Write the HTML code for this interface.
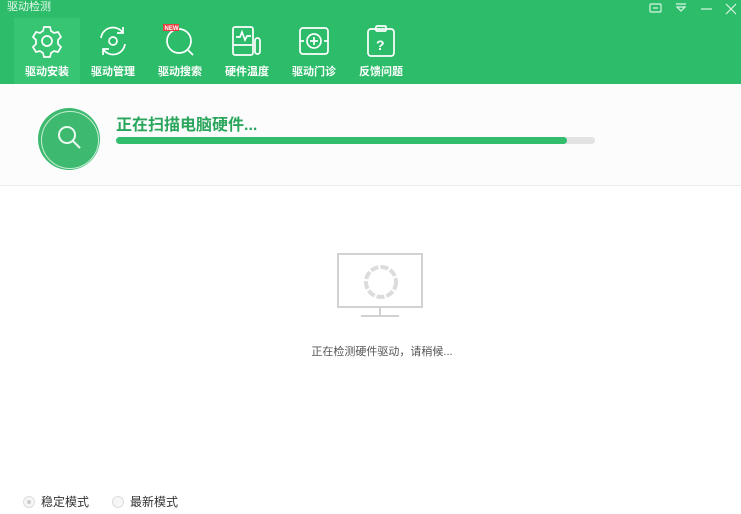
<!DOCTYPE html>
<html><head><meta charset="utf-8">
<style>
*{margin:0;padding:0;box-sizing:border-box}
body{width:741px;height:514px;overflow:hidden;background:#fff;font-family:"Liberation Sans","Noto Sans CJK SC",sans-serif;position:relative}
.hdr{position:absolute;left:0;top:0;width:741px;height:84px;background:#2dbd6a}
.title{position:absolute;left:7px;top:0;font-size:11px;color:#e8f8ee;line-height:14px}
.tab{position:absolute;top:18px;width:66px;height:66px;color:#fff;font-size:11px;font-weight:bold;text-align:center}
.tab.sel{background:#37c473}
.tab svg{position:absolute;left:16px;top:6px}
.tab span{position:absolute;left:0;right:0;top:47px;line-height:14px}
.strip{position:absolute;left:0;top:84px;width:741px;height:102px;background:#fcfcfc;border-bottom:1px solid #ececec}
.circ{position:absolute;left:38px;top:108px;width:62px;height:62px;border-radius:50%;background:#3dba6f}
.circ:after{content:"";position:absolute;left:3px;top:3px;width:56px;height:56px;border-radius:50%;border:1.5px solid #c8eed6}
.scan{position:absolute;left:116px;top:111px;font-size:16px;font-weight:bold;color:#2aa65c}
.bar{position:absolute;left:116px;top:137px;width:479px;height:7px;border-radius:4px;background:#e3e3e3}
.bar div{width:451px;height:7px;border-radius:4px;background:#31bd6b}
.msg{position:absolute;left:0;width:764px;top:343px;text-align:center;font-size:11px;color:#555}
.radio{position:absolute;top:495px;font-size:12px;color:#333;line-height:14px}
.radio i{display:inline-block;width:12px;height:12px;border:1px solid #ddd;border-radius:50%;vertical-align:-2px;margin-right:6px;position:relative;background:#f6f6f6}
.radio i.on:after{content:"";position:absolute;left:3px;top:3px;width:4px;height:4px;border-radius:50%;background:#ccc}
</style></head><body>
<div class="hdr">
<div class="title">驱动检测</div>
<svg style="position:absolute;left:649px;top:3px" width="90" height="12" fill="none" stroke="#d9f5e3" stroke-width="1.2">
<rect x="1" y="1" width="11" height="8" rx="1"/><path d="M4 5h5"/>
<path d="M27 1h10M28 4h8l-4 4z"/>
<path d="M52 6h11"/>
<path d="M77 1l10 10M87 1l-10 10"/>
</svg>
<div class="tab sel" style="left:14px"><svg width="34" height="34" fill="none" stroke="#fff" stroke-width="1.7"><path d="M14 3h6l1 4 3 2 4-1 3 5-3 3v4l3 3-3 5-4-1-3 2-1 4h-6l-1-4-3-2-4 1-3-5 3-3v-4l-3-3 3-5 4 1 3-2z"/><circle cx="17" cy="17" r="5"/></svg><span>驱动安装</span></div>
<div class="tab" style="left:80px"><svg width="34" height="34" fill="none" stroke="#fff" stroke-width="1.7"><path d="M5 14a12 12 0 0 1 22-5M29 20a12 12 0 0 1-22 5"/><path d="M27 3v6h-6M7 31v-6h6"/><circle cx="17" cy="17" r="4"/></svg><span>驱动管理</span></div>
<div class="tab" style="left:147px"><svg width="34" height="34" fill="none" stroke="#fff" stroke-width="1.7"><circle cx="16" cy="17" r="12"/><path d="M25 26l5 5"/><rect x="0" y="0" width="16" height="7" fill="#e84040" stroke="none"/><text x="1.5" y="6" font-size="6" fill="#fff" stroke="none" font-family="Liberation Sans" font-weight="bold">NEW</text></svg><span>驱动搜索</span></div>
<div class="tab" style="left:214px"><svg width="34" height="34" fill="none" stroke="#fff" stroke-width="1.7"><rect x="3" y="3" width="20" height="28" rx="2"/><path d="M3 21h20M6 13h4l2-5 3 8 2-4h4"/><rect x="25" y="14" width="5" height="16" rx="2.5"/></svg><span>硬件温度</span></div>
<div class="tab" style="left:281px"><svg width="34" height="34" fill="none" stroke="#fff" stroke-width="1.7"><rect x="3" y="4" width="28" height="26" rx="3"/><path d="M3 17h4M27 17h4"/><circle cx="17" cy="17" r="7"/><path d="M17 13v8M13 17h8"/></svg><span>驱动门诊</span></div>
<div class="tab" style="left:348px"><svg width="34" height="34" fill="none" stroke="#fff" stroke-width="1.7"><rect x="4" y="5" width="26" height="27" rx="3"/><rect x="12" y="2" width="10" height="5" rx="1"/><text x="12" y="26" font-size="14" fill="#fff" stroke="none" font-family="Liberation Sans">?</text></svg><span>反馈问题</span></div>
</div>
<div class="strip"></div>
<div class="circ"><svg style="position:absolute;left:18px;top:16px" width="28" height="28" fill="none" stroke="#eafaf0" stroke-width="2"><circle cx="11" cy="11" r="8"/><path d="M17 17l7 7"/></svg></div>
<div class="scan">正在扫描电脑硬件...</div>
<div class="bar"><div></div></div>
<svg style="position:absolute;left:337px;top:253px" width="88" height="66" fill="none" stroke="#d2d2d2" stroke-width="2">
<rect x="1" y="1" width="84" height="53"/><path d="M43 54v8M24 63h38"/>
<circle cx="44" cy="29" r="15" stroke="#dcdcdc" stroke-width="4" stroke-dasharray="8 2"/>
</svg>
<div class="msg">正在检测硬件驱动，请稍候...</div>
<div class="radio" style="left:23px"><i class="on"></i>稳定模式</div>
<div class="radio" style="left:112px"><i></i>最新模式</div>
</body></html>
